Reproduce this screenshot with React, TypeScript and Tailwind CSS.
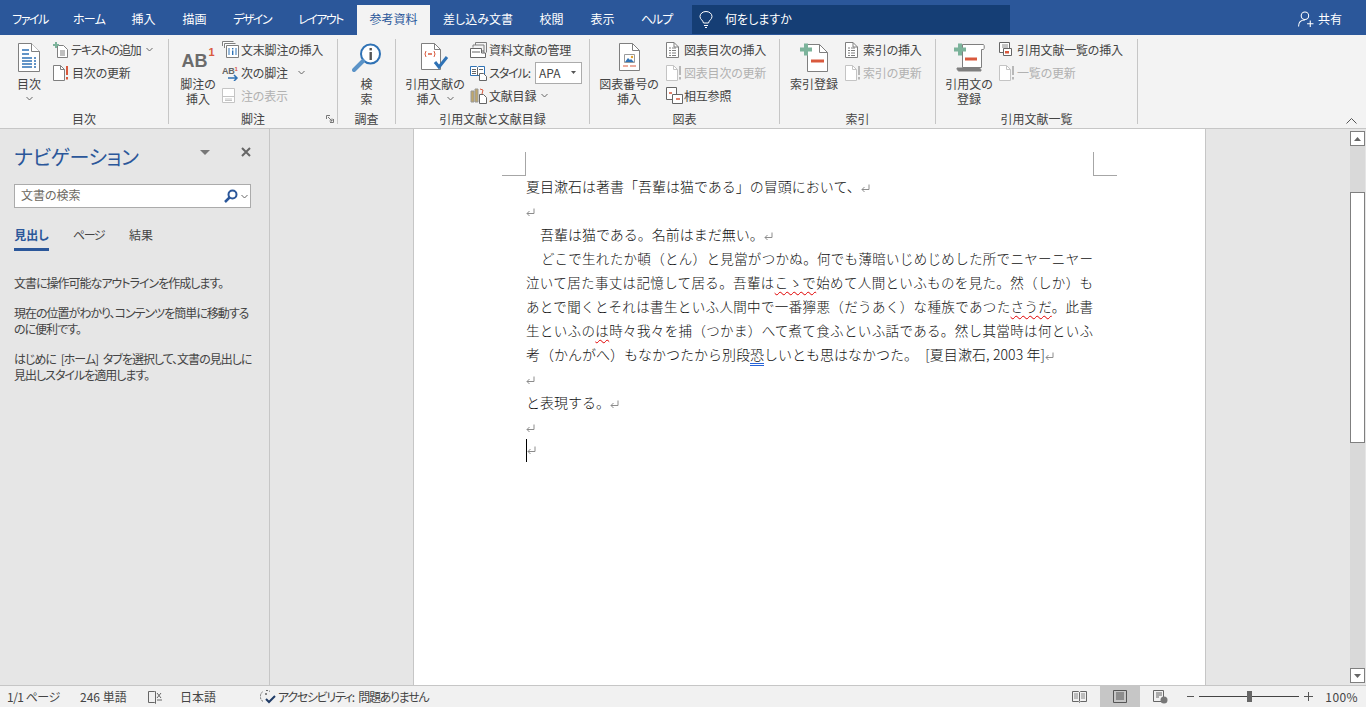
import type { ReactNode } from "react";
import clsx from "clsx";

// Word 2019 "References" tab with the navigation pane open.

const TABS = [
  { label: "ファイル", w: "w-[60px] tracking-[-1.5px]" },
  { label: "ホーム", w: "w-[58px] tracking-[-0.7px]" },
  { label: "挿入", w: "w-[51px]" },
  { label: "描画", w: "w-[51px]" },
  { label: "デザイン", w: "w-[64px] tracking-[-1.5px]" },
  { label: "レイアウト", w: "w-[73px] tracking-[-1.6px]" },
  { label: "参考資料", w: "w-[73px]", active: true },
  { label: "差し込み文書", w: "w-[96px]" },
  { label: "校閲", w: "w-[51px]" },
  { label: "表示", w: "w-[51px]" },
  { label: "ヘルプ", w: "w-[57px] tracking-[-1px]" },
];

const GRAY = "#7f7f7f";
const RED = "#d9593d";
const GREEN = "#7cb39b";
const BLUE = "#2f72b5";

function Chevron({ className }: { className?: string }) {
  return (
    <svg width="7" height="5" viewBox="0 0 7 5" className={className}>
      <path d="M.5 1l3 3 3-3" fill="none" stroke="#666" />
    </svg>
  );
}

function Page({ w = 14, h = 16, stroke = GRAY, children }: { w?: number; h?: number; stroke?: string; children?: ReactNode }) {
  return (
    <svg width={w} height={h} viewBox={`0 0 ${w} ${h}`}>
      <path d={`M.5 .5H${w - 5}L${w - 0.5} 5V${h - 0.5}H.5z`} fill="#fff" stroke={stroke} />
      <path d={`M${w - 5} .5V5H${w - 0.5}`} fill="none" stroke={stroke} />
      {children}
    </svg>
  );
}

function TocIcon() {
  return (
    <svg width="22" height="29" viewBox="0 0 22 29">
      <path d="M.5 .5h13l8 8v20H.5z" fill="#fff" stroke={GRAY} />
      <path d="M13.5 .5v8h8" fill="#fff" stroke={GRAY} />
      <path d="M4 7h7M4 11h7M4 15h10M16 15h2M4 18h10M16 18h2M4 21h10M16 21h2M4 24h10M16 24h2" stroke={BLUE} strokeWidth="1.4" />
    </svg>
  );
}

function AddTextIcon() {
  return (
    <svg width="16" height="16" viewBox="0 0 16 16">
      <path d="M4.500 3.500h6l4 4v8h-10z" fill="#fff" stroke={GRAY} />
      <path d="M7 9h5M7 11h5M7 13h5" stroke={GRAY} />
      <path d="M0 3h6M3 0v6" stroke={GREEN} strokeWidth="2" />
    </svg>
  );
}

function UpdateIcon({ disabled }: { disabled?: boolean }) {
  const c = disabled ? "#c4c4c4" : GRAY;
  return (
    <svg width="16" height="16" viewBox="0 0 16 16">
      <path d="M.5 .5h7l4 4v11h-11z" fill="#fff" stroke={c} />
      <path d="M7.500 .5v4h4" fill="none" stroke={c} />
      <path d="M14 1v9M14 12v2.500" stroke={disabled ? "#b8b8b8" : RED} strokeWidth="2" />
    </svg>
  );
}

function EndnoteIcon() {
  return (
    <svg width="17" height="17" viewBox="0 0 17 17">
      <path d="M.5 5V.5h11M2.500 7V2.500h11M4.500 16.500v-12h12v12z" fill="#fff" stroke={GRAY} />
      <path d="M7 7v7M14 7v7" stroke={BLUE} />
      <rect x="10" y="7" width="1.400" height="1.400" fill={BLUE} />
      <rect x="10" y="9.500" width="1.400" height="4.500" fill={BLUE} />
    </svg>
  );
}

function NextNoteIcon() {
  return (
    <svg width="17" height="16" viewBox="0 0 17 16">
      <text x="0" y="9" fontSize="9" fontWeight="700" fill="#666" fontFamily="Liberation Sans">AB</text>
      <text x="12.500" y="6" fontSize="6" fontWeight="700" fill={RED} fontFamily="Liberation Sans">1</text>
      <path d="M6 13h9M12 10l3 3-3 3" fill="none" stroke={BLUE} strokeWidth="1.500" />
    </svg>
  );
}

function ShowNotesIcon() {
  return (
    <svg width="13" height="15" viewBox="0 0 13 15">
      <path d="M.5 .5h12v14H.5zM.5 8.500h12" fill="#fff" stroke="#c4c4c4" />
      <path d="M3 11h7M3 12.500h7" stroke="#c4c4c4" />
    </svg>
  );
}

function SmartLookupIcon() {
  return (
    <svg width="30" height="30" viewBox="0 0 30 30">
      <circle cx="18.500" cy="11" r="9.500" fill="#fff" stroke={BLUE} strokeWidth="2" />
      <path d="M11 18L2 27" stroke="#5b93c7" strokeWidth="4" strokeLinecap="round" />
      <rect x="17.500" y="5" width="2.400" height="2.400" fill="#555" />
      <rect x="17.500" y="9" width="2.400" height="8" fill="#555" />
    </svg>
  );
}

function CitationIcon() {
  return (
    <svg width="28" height="28" viewBox="0 0 28 28">
      <path d="M.5 .5h13l6 6v20H.5z" fill="#fff" stroke={GRAY} />
      <path d="M13.500 .5v6h6" fill="none" stroke={GRAY} />
      <path d="M5 8q-2 3 0 6M13 8q2 3 0 6" fill="none" stroke={RED} />
      <path d="M7 11h4" stroke={RED} strokeWidth="1.500" />
      <path d="M14 19l4 5 8-10" fill="none" stroke={BLUE} strokeWidth="3" />
    </svg>
  );
}

function ManageIcon() {
  return (
    <svg width="17" height="16" viewBox="0 0 17 16">
      <path d="M5.500 3V.5h11v10M3 5.500V3h11v8" fill="none" stroke={GRAY} />
      <path d="M.5 6.500h11V11h4v4.500H.5z" fill="#fff" stroke="#666" />
      <path d="M13 8v2M2 10h8" stroke="#666" />
    </svg>
  );
}

function StyleIcon() {
  return (
    <svg width="17" height="16" viewBox="0 0 17 16">
      <path d="M.5 1.500h6l1 1 1-1h6v9h-14z" fill="#fff" stroke={BLUE} />
      <path d="M7.500 2.500v8M2 4.500h4M2 6.500h4M2 8.500h4M9 4.500h4" stroke="#666" />
      <path d="M9.500 8.500h4l3 3v4h-7z" fill="#fff" stroke="#666" />
    </svg>
  );
}

function BibliographyIcon() {
  return (
    <svg width="17" height="17" viewBox="0 0 17 17">
      <path d="M1 4h3v11H1zM5 2h3v13H5z" fill="#bfa76a" stroke="#999" />
      <path d="M9.500 7.500h4l3 3v6h-7z" fill="#fff" stroke="#666" />
      <path d="M10 2l3 1-1 4" fill="none" stroke={RED} />
    </svg>
  );
}

function CaptionIcon() {
  return (
    <svg width="21" height="28" viewBox="0 0 21 28">
      <path d="M.5 .5h13l7 7v20H.5z" fill="#fff" stroke={GRAY} />
      <path d="M13.500 .5v7h7" fill="none" stroke={GRAY} />
      <path d="M5.500 11.500h10v8h-10z" fill="#fff" stroke="#9a9a9a" />
      <path d="M6 19l3-4 2 2 1-1 3 3z" fill={BLUE} />
      <circle cx="13" cy="14" r="1.200" fill="#e0a030" />
      <path d="M4 23h5M11 23h6" stroke={RED} />
    </svg>
  );
}

function TableListIcon() {
  return (
    <Page w={13} h={16}>
      <path d="M3 6h2M6 6h4M3 8.500h2M6 8.500h4M3 11h2M6 11h4M3 13.500h2M6 13.500h4" stroke={GRAY} />
    </Page>
  );
}

function CrossRefIcon() {
  return (
    <svg width="17" height="17" viewBox="0 0 17 17">
      <path d="M.5 .5h10v12h-10z" fill="#fff" stroke="#666" />
      <path d="M6.500 7.500h10v9h-10z" fill="#fff" stroke="#666" />
      <path d="M3 6h3M10 12h4" stroke={RED} strokeWidth="1.500" />
    </svg>
  );
}

function MarkEntryIcon() {
  return (
    <svg width="28" height="30" viewBox="0 0 28 30">
      <path d="M7.500 1.500h12l8 8v19h-20z" fill="#fff" stroke={GRAY} />
      <path d="M19.500 1.500v8h8" fill="none" stroke={GRAY} />
      <path d="M0 6.500h12M6 .5v12" stroke={GREEN} strokeWidth="4" />
      <path d="M11 18h13" stroke={RED} strokeWidth="3" />
    </svg>
  );
}

function MarkCitationIcon() {
  return (
    <svg width="31" height="30" viewBox="0 0 31 30">
      <path d="M8.500 1.500h21c1 0 1 5 0 5h-2v18h-19z" fill="#fff" stroke={GRAY} />
      <path d="M3 25h22c1 0 2 1 2 3H5c-1 0-2-1-2-3z" fill="#7f7f7f" stroke="#7f7f7f" />
      <path d="M0 6.500h12M6 .5v12" stroke={GREEN} strokeWidth="4" />
      <path d="M11 16h12" stroke={RED} strokeWidth="3" />
    </svg>
  );
}

function CitationTableIcon() {
  return (
    <svg width="15" height="15" viewBox="0 0 15 15">
      <path d="M.5 .5h10v10H.5z" fill="#fff" stroke="#666" />
      <path d="M3 3h6M3 5h6" stroke="#888" />
      <path d="M4.500 6.500h8v7h-8z" fill="#fff" stroke="#666" />
      <rect x="6" y="9" width="4" height="2.500" fill={RED} />
    </svg>
  );
}

function Large({ icon, lines, className, chevron }: { icon: ReactNode; lines: string[]; className?: string; chevron?: "block" | "inline" }) {
  return (
    <div className={clsx("flex flex-col items-center", className)}>
      <div className="flex h-[37px] w-full justify-center pt-1">{icon}</div>
      {lines.map((line, i) => (
        <div key={line} className="flex h-[15px] items-center whitespace-nowrap text-[12px] leading-[15px]">
          {line}
          {chevron === "inline" && i === lines.length - 1 && <Chevron className="ml-[6px]" />}
        </div>
      ))}
      {chevron === "block" && <Chevron className="mt-[5px]" />}
    </div>
  );
}

function Small({ icon, iconW, label, disabled, chevron, labelClass, children }: { icon?: ReactNode; iconW: string; label: string; disabled?: boolean; chevron?: string; labelClass?: string; children?: ReactNode }) {
  return (
    <div className={clsx("flex h-[23px] items-center whitespace-nowrap pb-[2px] text-[12px] tracking-[-0.2px]", disabled && "text-[#b1b1b1]")}>
      <div className={clsx("flex shrink-0 items-center", iconW)}>{icon}</div>
      <span className={labelClass}>{label}</span>
      {chevron && <Chevron className={chevron} />}
      {children}
    </div>
  );
}

function Group({ label, className, children, launcher }: { label: string; className: string; children: ReactNode; launcher?: boolean }) {
  return (
    <div className={clsx("relative flex h-[85px] shrink-0 flex-col border-r border-[#c6c6c6]", className)}>
      <div className="flex flex-1">{children}</div>
      <div className="h-[14px] text-center text-[12px] leading-[18px]">{label}</div>
      {launcher && (
        <svg width="8" height="8" viewBox="0 0 8 8" className="absolute bottom-[1px] right-[3px]">
          <path d="M.5 4V.5H4M7.500 4v3.500H4M2 2l4 4M6 3.500V6H3.500" fill="none" stroke="#777" />
        </svg>
      )}
    </div>
  );
}

function Ribbon() {
  return (
    <div className="flex h-[94px] shrink-0 border-b border-[#c6c6c6] bg-[#f3f3f3] pt-1 text-[#444]">
      <Group label="目次" className="w-[169px]">
        <Large icon={<TocIcon />} lines={["目次"]} chevron="block" className="ml-[7px] w-[44px]" />
        <div className="ml-[2px]">
          <Small icon={<AddTextIcon />} iconW="w-[18px]" label="テキストの追加" labelClass="tracking-[-1.100px]" chevron="ml-[5px]" />
          <Small icon={<UpdateIcon />} iconW="w-[19px]" label="目次の更新" />
        </div>
      </Group>
      <Group label="脚注" className="w-[169px]" launcher>
        <Large
          icon={
            <div className="mt-[4px] flex items-start font-['Liberation_Sans',sans-serif] font-bold text-[#6b6b6b]">
              <span className="mt-[5px] text-[18px] leading-[18px]">AB</span>
              <span className="ml-[1px] text-[11px] leading-[11px] text-[#d9593d]">1</span>
            </div>
          }
          lines={["脚注の", "挿入"]}
          className="ml-[7px] w-[44px]"
        />
        <div className="ml-[2px]">
          <Small icon={<EndnoteIcon />} iconW="w-[19px]" label="文末脚注の挿入" />
          <Small icon={<NextNoteIcon />} iconW="w-[19px]" label="次の脚注" chevron="ml-[10px]" />
          <Small icon={<ShowNotesIcon />} iconW="w-[19px]" label="注の表示" disabled />
        </div>
      </Group>
      <Group label="調査" className="w-[58px]">
        <Large icon={<SmartLookupIcon />} lines={["検", "索"]} className="w-full" />
      </Group>
      <Group label="引用文献と文献目録" className="w-[194px]">
        <Large icon={<CitationIcon />} lines={["引用文献の", "挿入"]} chevron="inline" className="ml-[9px] w-[60px]" />
        <div className="ml-[5px]">
          <Small icon={<ManageIcon />} iconW="w-[19px]" label="資料文献の管理" />
          <Small icon={<StyleIcon />} iconW="w-[19px]" label="スタイル:" labelClass="tracking-[-1.100px]">
            <div className="ml-[5px] flex h-[22px] w-[47px] items-center justify-between border border-[#ababab] bg-white pl-[3px] pr-[5px] tracking-normal">
              APA
              <svg width="5" height="3" viewBox="0 0 5 3">
                <path d="M0 0h5L2.500 3z" fill="#555" />
              </svg>
            </div>
          </Small>
          <Small icon={<BibliographyIcon />} iconW="w-[19px]" label="文献目録" chevron="ml-[5px]" />
        </div>
      </Group>
      <Group label="図表" className="w-[190px]">
        <Large icon={<CaptionIcon />} lines={["図表番号の", "挿入"]} className="ml-[9px] w-[60px]" />
        <div className="ml-[7px]">
          <Small icon={<TableListIcon />} iconW="w-[18px]" label="図表目次の挿入" />
          <Small icon={<UpdateIcon disabled />} iconW="w-[18px]" label="図表目次の更新" disabled />
          <Small icon={<CrossRefIcon />} iconW="w-[18px]" label="相互参照" />
        </div>
      </Group>
      <Group label="索引" className="w-[156px]">
        <Large icon={<MarkEntryIcon />} lines={["索引登録"]} className="ml-[9px] w-[50px]" />
        <div className="ml-[6px]">
          <Small icon={<TableListIcon />} iconW="w-[18px]" label="索引の挿入" />
          <Small icon={<UpdateIcon disabled />} iconW="w-[18px]" label="索引の更新" disabled />
        </div>
      </Group>
      <Group label="引用文献一覧" className="w-[202px]">
        <Large icon={<MarkCitationIcon />} lines={["引用文の", "登録"]} className="ml-[8px] w-[50px]" />
        <div className="ml-[5px]">
          <Small icon={<CitationTableIcon />} iconW="w-[18px]" label="引用文献一覧の挿入" />
          <Small icon={<UpdateIcon disabled />} iconW="w-[18px]" label="一覧の更新" disabled />
        </div>
      </Group>
      <svg width="11" height="6" viewBox="0 0 11 6" className="ml-auto mr-[9px] mt-[79px]">
        <path d="M.5 5.500l5-5 5 5" fill="none" stroke="#555" />
      </svg>
    </div>
  );
}

function TitleBar() {
  return (
    <div className="flex h-[35px] shrink-0 items-end bg-[#2b579a] text-[12px] text-white">
      {TABS.map((t) => (
        <div
          key={t.label}
          className={clsx(
            "flex h-[30px] items-center justify-center pb-[3px]",
            t.w,
            t.active && "bg-[#f3f3f3] text-[#2b579a]",
          )}
        >
          {t.label}
        </div>
      ))}
      <div className="mb-px ml-[7px] flex h-[29px] w-[318px] items-center bg-[#153e75] pl-[7px]">
        <svg width="14" height="17" viewBox="0 0 14 17">
          <path d="M4.500 12C4 9 1 8.500 1 5.500a6 5 0 0 1 12 0C13 8.500 10 9 9.500 12zM5 14.500h4M6 16.500h2" fill="none" stroke="#fff" />
        </svg>
        <span className="ml-[12px] pb-[2px]">何をしますか</span>
      </div>
      <div className="ml-auto mr-[24px] flex h-[30px] items-center pb-[3px]">
        <svg width="16" height="16" viewBox="0 0 15 15">
          <circle cx="6.500" cy="4.500" r="3.500" fill="none" stroke="#fff" />
          <path d="M.5 14.500c0-4 2-6 6-6M8.500 12h6M11.500 9v6" fill="none" stroke="#fff" />
        </svg>
        <span className="ml-[4px]">共有</span>
      </div>
    </div>
  );
}

function NavPane() {
  return (
    <div className="flex w-[270px] shrink-0 flex-col border-r border-[#c6c6c6] bg-[#e6e6e6] px-[14px] text-[12px] text-[#444]">
      <div className="flex h-[44px] items-center">
        <span className="mt-[11px] text-[20px] leading-[28px] tracking-[-0.4px] text-[#2b579a]">ナビゲーション</span>
        <svg width="10" height="5" viewBox="0 0 10 5" className="ml-auto mt-[2px]">
          <path d="M0 0h10L5 5z" fill="#777" />
        </svg>
        <svg width="10" height="10" viewBox="0 0 10 10" className="ml-[31px] mr-[4px] mt-[2px]">
          <path d="M1 1l8 8M9 1l-8 8" stroke="#666" strokeWidth="2" />
        </svg>
      </div>
      <div className="mt-[11px] flex h-[24px] w-[237px] items-center border border-[#ababab] bg-white pb-[2px] pl-[6px] text-[#6e6a62]">
        文書の検索
        <svg width="14" height="14" viewBox="0 0 14 14" className="ml-auto mt-[2px]">
          <circle cx="8.500" cy="5.500" r="4" fill="none" stroke="#2b579a" strokeWidth="2" />
          <path d="M5.500 8.500L1 13" stroke="#2b579a" strokeWidth="2.500" />
        </svg>
        <Chevron className="ml-[3px] mr-[2px] mt-[2px]" />
      </div>
      <div className="mt-[18px] flex h-[25px] items-start">
        <div className="h-[25px] w-[35px] border-b-[3px] border-[#2b579a] text-center font-bold leading-[18px] text-[#2b579a]">見出し</div>
        <div className="ml-[24px] w-[30px] whitespace-nowrap leading-[18px] tracking-[-1.500px]">ページ</div>
        <div className="ml-[26px] leading-[18px]">結果</div>
      </div>
      <div className="mt-[24px] whitespace-nowrap leading-[16px] tracking-[-1px] [word-spacing:3px] [&>p]:mb-[14px]">
        <p>文書に操作可能なアウトラインを作成します。</p>
        <p>
          現在の位置がわかり、コンテンツを簡単に移動する
          <br />
          のに便利です。
        </p>
        <p>
          はじめに [ホーム] タブを選択して、文書の見出しに
          <br />
          見出しスタイルを適用します。
        </p>
      </div>
    </div>
  );
}

function Mark() {
  return (
    <svg width="9" height="9" viewBox="0 0 9 9" className="inline-block align-[-1px]">
      <path d="M8 .5V5.500H1M3.500 3L1 5.500 3.500 8" fill="none" stroke="#8c8c8c" />
    </svg>
  );
}

const WAVY = "underline decoration-wavy decoration-[#e00000] decoration-1 underline-offset-[3px]";
const JUSTIFY = "text-justify text-[13.500px] [text-align-last:justify]";

function Sheet() {
  return (
    <div className="flex h-full w-[793px] shrink-0 flex-col border-x border-[#c6c6c6] bg-white">
      <div className="ml-[88px] mt-[23px] flex w-[615px] justify-between">
        <div className="-mb-[2px] h-[24px] w-[24px] border-b border-r border-[#a6a6a6]" />
        <div className="-mb-[2px] h-[24px] w-[24px] border-b border-l border-[#a6a6a6]" />
      </div>
      <div className="ml-[112px] w-[567px] text-[14px] font-light leading-[24px] text-[#111]">
        <div>夏目漱石は著書「吾輩は猫である」の冒頭において、<Mark /></div>
        <div><Mark /></div>
        <div className="pl-[14px]">吾輩は猫である。名前はまだ無い。<Mark /></div>
        <div className={clsx("pl-[15px]", JUSTIFY)}>どこで生れたか頓（とん）と見當がつかぬ。何でも薄暗いじめじめした所でニヤーニヤー</div>
        <div className={JUSTIFY}>泣いて居た事丈は記憶して居る。吾輩は<span className={WAVY}>こゝで</span>始めて人間といふものを見た。然（しか）も</div>
        <div className={JUSTIFY}>あとで聞くとそれは書生といふ人間中で一番獰悪（だうあく）な種族であつた<span className={WAVY}>さうだ</span>。此書</div>
        <div className={JUSTIFY}>生といふの<span className={WAVY}>は</span>時々我々を捕（つかま）へて煮て食ふといふ話である。然し其當時は何といふ</div>
        <div>
          考（かんがへ）もなかつたから別段
          <span className="underline decoration-double decoration-[#2563d8] decoration-1 underline-offset-[3px]">恐</span>
          しいとも思はなかつた。
          <span className="ml-[4px] tracking-[0.1px]"> [夏目漱石, 2003 年]</span>
          <Mark />
        </div>
        <div><Mark /></div>
        <div>と表現する。<Mark /></div>
        <div><Mark /></div>
        <div className="flex h-[24px] items-center">
          <span className="h-[23px] w-px bg-black" />
          <Mark />
        </div>
      </div>
    </div>
  );
}

function Scrollbar() {
  return (
    <div className="flex w-[17px] shrink-0 flex-col pl-px pr-px pt-[2px] pb-[2px]">
      <div className="flex h-[15px] w-[15px] items-center justify-center border border-[#7f7f7f] bg-white">
        <svg width="7" height="4" viewBox="0 0 7 4"><path d="M0 4h7L3.500 0z" fill="#666" /></svg>
      </div>
      <div className="flex flex-1 flex-col bg-[#d9d9d9] pt-[46px]">
        <div className="h-[251px] border border-[#7f7f7f] bg-white" />
      </div>
      <div className="flex h-[15px] w-[15px] items-center justify-center border border-[#7f7f7f] bg-white">
        <svg width="7" height="4" viewBox="0 0 7 4"><path d="M0 0h7L3.500 4z" fill="#666" /></svg>
      </div>
    </div>
  );
}

function StatusBar() {
  return (
    <div className="flex h-[22px] shrink-0 items-center border-t border-[#c6c6c6] bg-[#f1f1f1] text-[12px] text-[#444]">
      <span className="ml-[7px] w-[73px] tracking-[-0.500px]">1/1 ページ</span>
      <span className="w-[68px]">246 単語</span>
      <svg width="15" height="14" viewBox="0 0 15 14" className="w-[15px]">
        <path d="M6.500 1.500h-6v11h6l1 1V1.500z" fill="none" stroke="#666" />
        <path d="M9 3l4 5M13 3L9 8M9 10h5" stroke="#666" />
      </svg>
      <span className="ml-[17px] w-[80px]">日本語</span>
      <svg width="17" height="15" viewBox="0 0 17 15">
        <path d="M3 12.500a6 6 0 0 1 0-10M6 1.500a6 6 0 0 1 4 1" fill="none" stroke="#666" strokeDasharray="2 1" />
        <circle cx="6" cy="5" r="1" fill="#666" />
        <path d="M6 10l3 3 6-6" fill="none" stroke="#1f3b66" strokeWidth="2" />
      </svg>
      <span className="ml-[1px] tracking-[-1.300px] [word-spacing:3px]">アクセシビリティ: 問題ありません</span>

      <svg width="15" height="14" viewBox="0 0 15 14" className="ml-auto">
        <path d="M.5 1.500h6l1 1 1-1h6v10h-6l-1 1-1-1h-6zM7.500 2.500v9" fill="none" stroke="#666" />
        <path d="M2 4h4M2 6h4M2 8h4M9 4h4M9 6h4M9 8h4" stroke="#888" />
      </svg>
      <div className="ml-[13px] flex h-[21px] w-[40px] items-center justify-center bg-[#c6c6c6]">
        <svg width="14" height="13" viewBox="0 0 14 13">
          <path d="M.5 .5h13v12H.5z" fill="none" stroke="#555" />
          <path d="M3 3h8M3 5h8M3 7h8M3 9h8" stroke="#555" />
        </svg>
      </div>
      <svg width="15" height="14" viewBox="0 0 15 14" className="ml-[13px]">
        <path d="M.5 .5h10v11H.5zM3 3h6M3 5h6M3 7h3" fill="none" stroke="#666" />
        <circle cx="11" cy="10" r="3.500" fill="#777" />
      </svg>
      <div className="ml-[19px] h-px w-[7px] bg-[#555]" />
      <div className="ml-[5px] flex h-[12px] w-[100px] items-center">
        <div className="h-px w-[48px] bg-[#444]" />
        <div className="h-[11px] w-[5px] bg-[#666]" />
        <div className="h-px w-[47px] bg-[#444]" />
      </div>
      <svg width="9" height="9" viewBox="0 0 9 9" className="ml-[5px]">
        <path d="M0 4.500h9M4.500 0v9" stroke="#555" />
      </svg>
      <span className="ml-[11px] mr-[8px] w-[34px] whitespace-nowrap text-right tracking-[0.4px]">100%</span>
    </div>
  );
}

export default function App() {
  return (
    <div className="flex h-[707px] w-[1366px] flex-col overflow-hidden bg-[#e6e6e6] font-['Noto_Sans_CJK_JP',sans-serif] [font-feature-settings:'palt']">
      <TitleBar />
      <Ribbon />
      <div className="flex min-h-0 flex-1">
        <NavPane />
        <div className="flex min-w-0 flex-1 justify-center overflow-hidden [font-feature-settings:normal]">
          <Sheet />
        </div>
        <Scrollbar />
      </div>
      <StatusBar />
    </div>
  );
}
